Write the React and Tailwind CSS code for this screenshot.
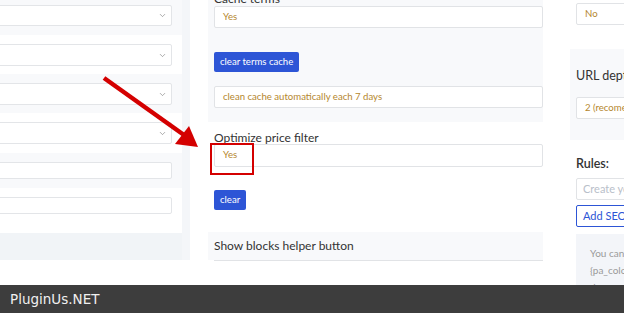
import { ChevronDown } from "lucide-react";

const LeftRow = ({ bg, h, top, inputH, select }) => (
  <div className={`${bg} ${h} ${top} shrink-0`}>
    <div
      className={`-ml-2 w-[180px] ${inputH} bg-white border border-[#e3e5e8] rounded-[2px] flex items-center justify-end pr-[4px]`}
    >
      {select && <ChevronDown size={9} strokeWidth={1.6} className="text-[#777]" />}
    </div>
  </div>
);

const Field = ({ children, className = "" }) => (
  <div
    className={`h-[22px] bg-white border border-[#e1e3e6] rounded-[2px] flex items-center pl-[8px] text-[9.6px] text-[#b5872e] whitespace-nowrap overflow-hidden ${className}`}
  >
    {children}
  </div>
);

const BlueButton = ({ children }) => (
  <button className="h-[20px] px-[6px] bg-[#2d55d6] text-white text-[9.6px] rounded-[2px] leading-none">
    {children}
  </button>
);

export default function App() {
  return (
    <div className="relative w-[624px] h-[313px] overflow-hidden bg-white font-['Lato',sans-serif] text-[#333]">
      <div className="flex h-[285px] overflow-hidden">
        {/* left settings column */}
        <div className="w-[182px] shrink-0 flex flex-col">
          <LeftRow bg="bg-[#f8f9fb]" h="h-[35px]" top="pt-[5px]" inputH="h-[21px]" select />
          <LeftRow bg="bg-white" h="h-[39px]" top="pt-[9px]" inputH="h-[22px]" select />
          <LeftRow bg="bg-[#f8f9fb]" h="h-[39px]" top="pt-[9px]" inputH="h-[22px]" select />
          <LeftRow bg="bg-white" h="h-[40px]" top="pt-[9px]" inputH="h-[22px]" select />
          <LeftRow bg="bg-[#f8f9fb]" h="h-[35px]" top="pt-[9px]" inputH="h-[17px]" />
          <LeftRow bg="bg-white" h="h-[45px]" top="pt-[9px]" inputH="h-[17px]" />
          <div className="h-[27px] bg-[#f1f4f7]" />
        </div>
        <div className="w-[8px] shrink-0">
          <div className="h-[260px] bg-[#f4f6f9]" />
        </div>

        {/* middle column */}
        <div className="w-[335px] shrink-0 ml-[18px] flex flex-col">
          <div className="h-[122px] bg-[#f8f9fb] pl-[6px] flex flex-col">
            <div className="-mt-[9px] h-[15px] text-[12px] leading-[15px]">Cache terms</div>
            <Field>Yes</Field>
            <div className="mt-[19px]">
              <BlueButton>clear terms cache</BlueButton>
            </div>
            <Field className="mt-[14px]">clean cache automatically each 7 days</Field>
          </div>
          <div className="pl-[6px] pt-[9px] h-[110px] flex flex-col">
            <div className="h-[13px] text-[12px] leading-[13px]">Optimize price filter</div>
            <Field className="h-[23px]">Yes</Field>
            <div className="mt-[18px]">
              <BlueButton>clear</BlueButton>
            </div>
          </div>
          <div className="h-[28px] bg-[#f8f9fb] pl-[6px] flex items-center text-[12px]">
            Show blocks helper button
          </div>
          <div className="ml-[6px] border-t border-[#e1e3e6]" />
        </div>

        {/* right column */}
        <div className="flex-1 ml-[27px] overflow-hidden">
          <div className="h-[49px] pl-[6px] pt-[3px]">
            <Field className="h-[21px] w-[80px]">No</Field>
          </div>
          <div className="h-[91px] bg-[#f8f9fb] pl-[6px] pt-[19px] whitespace-nowrap">
            <div className="text-[12.5px] h-[15px] leading-[15px]">URL depth</div>
            <Field className="mt-[14px] h-[20px] w-[120px]">2 (recomended)</Field>
          </div>
          <div className="pl-[6px] pt-[16px] whitespace-nowrap">
            <div className="text-[12.5px] font-semibold h-[16px] leading-[16px]">Rules:</div>
            <div className="mt-[6px] h-[22px] w-[140px] border border-[#e1e3e6] rounded-[2px] flex items-center pl-[6px] text-[11px] text-[#b9c0ca]">
              Create your rule
            </div>
            <div className="mt-[5px] h-[22px] w-[140px] border border-[#2d55d6] rounded-[2px] flex items-center pl-[6px] text-[11px] text-[#2d55d6]">
              Add SEO rule
            </div>
            <div className="mt-[7px] w-[140px] h-[80px] bg-[#f3f5f9] pl-[14px] pt-[11px] text-[10px] leading-[17px] text-[#9a9a9a]">
              <div>You can use variables</div>
              <div>{"{pa_color}"}, {"{pa_size}"}</div>
              <div>documentation</div>
            </div>
          </div>
        </div>
      </div>

      <div className="h-[28px] bg-[#3d3d3d] flex items-center pl-[10px] text-[13.5px] text-[#f0f0f0] font-['DejaVu_Sans',sans-serif]">
        PluginUs.NET
      </div>

      {/* annotation overlay */}
      <div className="absolute left-[210px] top-[143px] w-[44px] h-[32px] border-2 border-[#d40000]" />
      <svg className="absolute left-0 top-0 pointer-events-none" width="624" height="313">
        <line x1="104" y1="78" x2="184" y2="135" stroke="#d40000" strokeWidth="4.5" />
        <polygon points="198,147 175,144 189,126" fill="#d40000" />
      </svg>
    </div>
  );
}
